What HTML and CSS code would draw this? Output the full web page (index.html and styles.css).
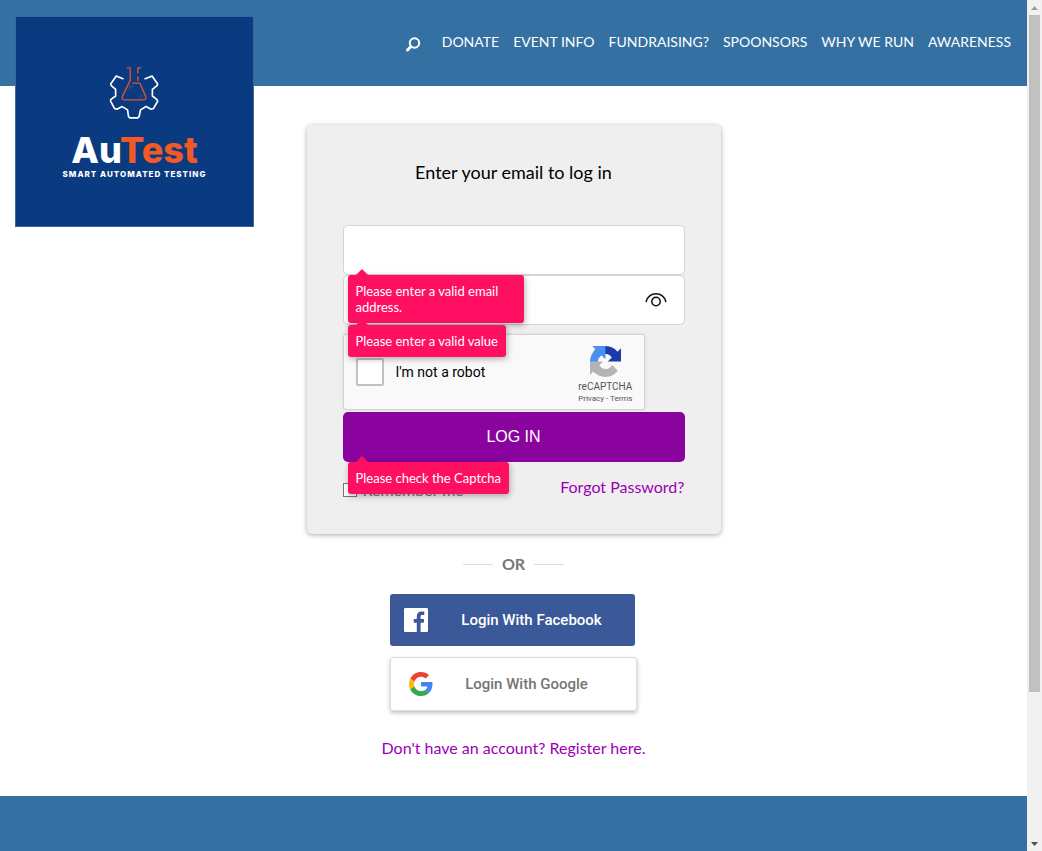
FILE: index.html
```html
<!DOCTYPE html>
<html lang="en">
<head>
<meta charset="utf-8">
<title>Log in</title>
<link rel="stylesheet" href="styles.css">
</head>
<body>
<div class="page">
  <header class="header">
    <a class="logo" href="#" aria-label="AuTest home">
      <svg class="logo-mark" viewBox="325 195 160 165" fill="none" stroke-linejoin="round" stroke-linecap="round" aria-hidden="true">
        <path stroke="#fff" stroke-width="5" d="M370 236 350 228 333 252 335 257 348 268V288L333 299V304L345 326 352 328 368 320 384 330 387 350 391 354H415L419 350 423 330 440 320 455 328 462 326 475 304 473 299 459 288V268L473 257 475 252 458 228 437 236"/>
        <g stroke="#d9553a" stroke-width="4">
          <path d="M383 203H392V241L368 290Q366 300 376 300H432Q441 300 439 290L421 249H400"/>
          <path d="M424 203H415V219M415 230V241"/>
          <path stroke-width="2" opacity=".7" d="M391 257V267M396 259H401M418 292H421M427 285V293"/>
        </g>
      </svg>
      <span class="logo-name">Au<span class="logo-accent">Test</span></span>
      <span class="logo-tagline">SMART AUTOMATED TESTING</span>
    </a>
    <nav class="nav">
      <a class="search" href="#" aria-label="Search">
        <svg viewBox="0 0 16 16" fill="none" stroke="#fff" aria-hidden="true"><circle cx="9.5" cy="6" r="4.7" stroke-width="2"/><path d="M5.700 9.800 2.500 13" stroke-width="3" stroke-linecap="round"/></svg>
      </a>
      <a href="#">DONATE</a>
      <a href="#">EVENT INFO</a>
      <a href="#">FUNDRAISING?</a>
      <a href="#">SPOONSORS</a>
      <a href="#">WHY WE RUN</a>
      <a href="#">AWARENESS</a>
    </nav>
  </header>

  <main class="main">
    <form class="card" novalidate>
      <h1 class="title">Enter your email to log in</h1>
      <div class="field">
        <input class="input" type="email" aria-label="Email">
        <div class="tip" role="alert">Please enter a valid email address.</div>
      </div>
      <div class="field">
        <input class="input" type="password" aria-label="Password">
        <button class="reveal" type="button" aria-label="Show password">
          <svg viewBox="0 0 22 16" fill="none" stroke="#111" stroke-width="1.500" aria-hidden="true"><path d="M1 10C3 -1 19 -1 21 10"/><circle cx="11" cy="9.500" r="4.200"/></svg>
        </button>
        <div class="tip" role="alert">Please enter a valid value</div>
      </div>
      <div class="captcha">
        <label class="captcha-label"><input class="captcha-box" type="checkbox">I'm not a robot</label>
        <div class="captcha-brand">
          <svg class="captcha-logo" viewBox="0 0 64 64" aria-hidden="true">
            <path fill="#1c3aa9" d="M64 31.955l-.033-1.370V4.687l-7.160 7.160C50.948 4.674 42.033.093 32.050.093c-10.400 0-19.622 4.960-25.458 12.640l11.736 11.860a15.550 15.550 0 0 1 4.754-5.334c2.050-1.600 4.952-2.906 8.968-2.906.485 0 .860.057 1.135.163 4.976.393 9.288 3.140 11.828 7.124l-8.307 8.307L64 31.953"/>
            <path fill="#4a90f4" d="M31.862.094l-1.370.033H4.594l7.160 7.160C4.580 13.147 0 22.060 0 32.046c0 10.400 4.960 19.622 12.640 25.458L24.500 45.768a15.550 15.550 0 0 1-5.334-4.754c-1.600-2.050-2.906-4.952-2.906-8.968 0-.485.057-.860.163-1.135.393-4.976 3.140-9.288 7.124-11.828l8.307 8.307L31.860.095"/>
            <path fill="#b4b4b4" d="M.001 32.045l.033 1.370v25.898l7.160-7.160c5.860 7.173 14.774 11.754 24.760 11.754 10.400 0 19.622-4.960 25.458-12.640l-11.736-11.860a15.550 15.550 0 0 1-4.754 5.334c-2.050 1.600-4.952 2.906-8.968 2.906-.485 0-.860-.057-1.135-.163-4.976-.393-9.288-3.140-11.828-7.124l8.307-8.307c-10.522.040-22.400.066-27.295-.005"/>
          </svg>
          <span class="captcha-name">reCAPTCHA</span>
          <span class="captcha-links"><a href="#">Privacy</a> - <a href="#">Terms</a></span>
        </div>
      </div>
      <div class="field">
        <button class="submit" type="submit">LOG IN</button>
        <div class="tip" role="alert">Please check the Captcha</div>
      </div>
      <div class="options">
        <label class="remember"><input class="remember-box" type="checkbox">Remember me</label>
        <a class="link" href="#">Forgot Password?</a>
      </div>
    </form>

    <div class="divider">OR</div>

    <div class="social">
      <button class="social-button facebook" type="button">
        <svg class="social-icon" viewBox="0 0 24 24" aria-hidden="true"><path fill="#fff" d="M22.700 0H1.300C.600 0 0 .600 0 1.300v21.400C0 23.400.600 24 1.300 24h11.500v-9.300H9.700V11h3.100V8.400c0-3.100 1.900-4.800 4.700-4.800 1.300 0 2.500.100 2.800.150V7h-1.900c-1.500 0-1.800.700-1.800 1.700V11h3.600l-.500 3.700h-3.100V24h6.100c.700 0 1.300-.600 1.300-1.300V1.300C24 .600 23.400 0 22.700 0z"/></svg>
        <span class="social-text">Login With Facebook</span>
      </button>
      <button class="social-button google" type="button">
        <svg class="social-icon" viewBox="0 0 48 48" aria-hidden="true">
          <path fill="#ea4335" d="M24 9.500c3.540 0 6.710 1.220 9.210 3.600l6.850-6.850C35.900 2.380 30.470 0 24 0 14.620 0 6.510 5.380 2.560 13.220l7.980 6.190C12.430 13.720 17.740 9.500 24 9.500z"/>
          <path fill="#4285f4" d="M46.980 24.550c0-1.570-.150-3.090-.380-4.550H24v9.020h12.940c-.580 2.960-2.260 5.480-4.780 7.180l7.730 6c4.510-4.180 7.090-10.360 7.090-17.650z"/>
          <path fill="#fbbc05" d="M10.530 28.590c-.480-1.450-.760-2.990-.760-4.590s.270-3.140.760-4.590l-7.980-6.190C.920 16.460 0 20.120 0 24c0 3.880.920 7.540 2.560 10.780l7.970-6.190z"/>
          <path fill="#34a853" d="M24 48c6.480 0 11.930-2.130 15.890-5.810l-7.730-6c-2.150 1.450-4.920 2.300-8.160 2.300-6.260 0-11.570-4.220-13.470-9.910l-7.980 6.190C6.510 42.620 14.620 48 24 48z"/>
        </svg>
        <span class="social-text">Login With Google</span>
      </button>
    </div>

    <a class="link" href="#">Don't have an account? Register here.</a>
  </main>
  <footer class="footer"></footer>
</div>
<div class="scrollbar" aria-hidden="true">
  <svg class="scroll-arrow" viewBox="0 0 15 15"><path fill="#a0a0a0" d="M4 10 7.500 6 11 10z"/></svg>
  <div class="scroll-thumb"></div>
  <svg class="scroll-arrow" viewBox="0 0 15 15"><path fill="#505050" d="M4 6 7.500 10 11 6z"/></svg>
</div>
</body>
</html>
```

FILE: styles.css
```css
* { box-sizing: border-box; }

body {
  margin: 0;
  min-height: 100vh;
  display: flex;
  background: #fff;
  color: #000;
  font: 16px/20px Lato, sans-serif;
}

a { color: inherit; text-decoration: none; }
button { border: 0; padding: 0; cursor: pointer; }
input { margin: 0; }
svg { display: block; }

.page { flex: 1; display: flex; flex-direction: column; }

.header {
  position: relative;
  height: 86px;
  padding: 32px 16px;
  background: #3470a2;
  color: #fff;
}

.logo {
  position: absolute;
  top: 16px;
  left: 15px;
  width: 239px;
  height: 211px;
  padding-top: 48px;
  display: flex;
  flex-direction: column;
  align-items: center;
  background: #0a3a80;
  border: 1px solid #4164a0;
  font-family: Inter, sans-serif;
}
.logo-mark { width: 53px; height: 55px; }
.logo-name { margin-top: 10px; font-size: 36px; line-height: 40px; font-weight: 800; }
.logo-accent { color: #f15a24; }
.logo-tagline { font-size: 8px; line-height: 8px; font-weight: 800; letter-spacing: 1px; }

.nav {
  display: flex;
  justify-content: flex-end;
  gap: 14px;
  font-size: 14px;
}
.search { width: 16px; margin: 5px 7px 0 0; }
.search svg { width: 16px; height: 16px; }

.main {
  display: flex;
  flex-direction: column;
  align-items: center;
  padding: 39px 16px 38px;
}

.card {
  width: 100%;
  max-width: 414px;
  padding: 36px 36px 34px;
  background: #efefef;
  border-radius: 5px;
  box-shadow: 0 1px 5px rgba(0, 0, 0, .35);
}
.title { margin: 0 0 42px; font-size: 18px; line-height: 22px; font-weight: 400; text-align: center; }

.field { position: relative; }
.input {
  display: block;
  width: 100%;
  height: 50px;
  padding: 0 48px 0 16px;
  background: #fff;
  border: 1px solid #d5d5d5;
  border-radius: 5px;
  font: inherit;
}
.reveal { position: absolute; top: 17px; right: 18px; width: 22px; background: none; }

.tip {
  position: absolute;
  z-index: 1;
  top: 100%;
  left: 5px;
  width: max-content;
  max-width: 176px;
  padding: 8px;
  background: #ff0f62;
  border-radius: 3px;
  box-shadow: 1px 2px 6px rgba(0, 0, 0, .3);
  color: #fff;
  font-size: 13px;
  line-height: 16px;
}
.tip::before {
  content: "";
  position: absolute;
  bottom: 100%;
  left: 8px;
  border: 6px solid transparent;
  border-top: 0;
  border-bottom-color: #ff0f62;
}

.captcha {
  max-width: 302px;
  height: 76px;
  margin: 9px 0 2px;
  padding: 0 11px 0 12px;
  display: flex;
  justify-content: space-between;
  align-items: center;
  background: #f9f9f9;
  border: 1px solid #d3d3d3;
  border-radius: 3px;
  box-shadow: 0 0 3px rgba(0, 0, 0, .1);
  font-family: Roboto, sans-serif;
}
.captcha-label { display: flex; align-items: center; gap: 12px; font-size: 14px; }
.captcha-box {
  appearance: none;
  width: 28px;
  height: 28px;
  background: #fff;
  border: 2px solid #c1c1c1;
  border-radius: 2px;
}
.captcha-brand { display: flex; flex-direction: column; align-items: center; padding-top: 6px; color: #555; }
.captcha-logo { width: 31px; height: 31px; margin-bottom: 3px; }
.captcha-name { font-size: 10px; line-height: 14px; }
.captcha-links { font-size: 8px; line-height: 10px; }

.submit {
  display: block;
  width: 100%;
  height: 50px;
  background: #8a039f;
  border-radius: 5px;
  color: #fff;
  font: 16px "Liberation Sans", sans-serif;
}

.options { display: flex; justify-content: space-between; align-items: flex-start; padding-top: 15px; }
.remember { display: flex; align-items: center; gap: 6px; padding-top: 3px; color: #777; }
.remember-box {
  appearance: none;
  width: 14px;
  height: 14px;
  background: #fff;
  border: 1px solid #777;
}
.link { color: #9b00b3; }

.divider {
  display: flex;
  align-items: center;
  gap: 9px;
  margin: 20px 0;
  color: #777;
  font-weight: 700;
}
.divider::before, .divider::after { content: ""; width: 30px; height: 1px; background: #ddd; }

.social { width: 247px; display: grid; gap: 11px; margin-bottom: 27px; }
.social-button {
  display: flex;
  align-items: center;
  border-radius: 3px;
  font: 500 15px/20px Roboto, sans-serif;
}
.social-icon { width: 24px; height: 24px; }
.social-text { flex: 1; text-align: center; }
.facebook {
  height: 52px;
  margin-right: 2px;
  padding: 0 0 0 14px;
  background: #3b5998;
  color: #fff;
}
.google {
  height: 54px;
  padding: 0 16px 0 18px;
  background: #fff;
  border: 1px solid #ddd;
  box-shadow: 0 2px 4px rgba(0, 0, 0, .25);
  color: #757575;
}

.footer { flex: 1; background: #3470a2; }

.scrollbar { width: 15px; display: flex; flex-direction: column; background: #f1f1f1; }
.scroll-arrow { width: 15px; height: 15px; }
.scroll-thumb { flex: 0 0 auto; height: calc(80vh - 4px); margin: 0 2px auto; background: #c1c1c1; }
```
